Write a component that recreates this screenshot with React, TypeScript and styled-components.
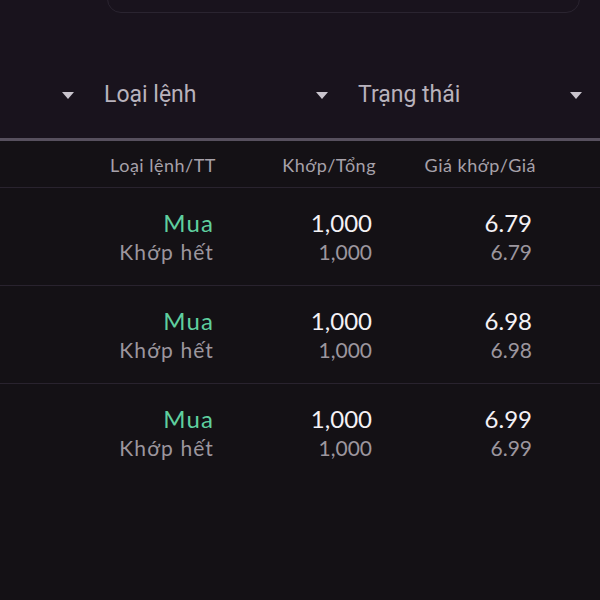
import React from 'react';
import styled, { createGlobalStyle } from 'styled-components';

const GlobalStyle = createGlobalStyle`
  html, body {
    margin: 0;
    padding: 0;
    background: #141115;
  }
  body {
    font-family: 'Lato', 'Noto Sans', sans-serif;
    overflow: hidden;
  }
`;

const Page = styled.div`
  width: 600px;
  height: 600px;
  display: flex;
  flex-direction: column;
  background: #141115;
  overflow: hidden;
`;

const TopPanel = styled.div`
  height: 138px;
  background: #19131d;
  display: flex;
  flex-direction: column;
  overflow: hidden;
`;

const SearchBox = styled.div`
  margin: -27px 0 0 107px;
  width: 471px;
  height: 38px;
  border: 1.5px solid #2a2430;
  border-radius: 14px;
  flex-shrink: 0;
`;

const FilterRow = styled.div`
  display: flex;
  gap: 30px;
  margin: 66px 0 0 -150px;
  height: 30px;
  align-items: center;
`;

const Filter = styled.div`
  width: 224px;
  flex-shrink: 0;
  display: flex;
  align-items: center;
  justify-content: space-between;
  font-family: 'Roboto', sans-serif;
  font-size: 23px;
  color: #b8b2bc;
`;

const Caret = styled.span`
  width: 0;
  height: 0;
  border-left: 6.5px solid transparent;
  border-right: 6.5px solid transparent;
  border-top: 7px solid #c9c4cd;
  margin-top: 2px;
`;

const Divider = styled.div`
  height: 3px;
  background: #57505e;
`;

const Grid = styled.div`
  display: grid;
  grid-template-columns: 216px 160px 160px;
`;

const HeaderRow = styled(Grid)`
  height: 46px;
  align-items: center;
  border-bottom: 1px solid #29232e;
  font-size: 18px;
  letter-spacing: 0.5px;
  color: #a7a1aa;
`;

const HeadCell = styled.div`
  text-align: right;
  padding-top: 2px;
`;

const OrderRow = styled(Grid)<{ $last?: boolean }>`
  height: 98px;
  box-sizing: border-box;
  border-bottom: ${p => (p.$last ? 'none' : '1px solid #29232e')};
  align-content: center;
`;

const Cell = styled.div<{ $spaced?: boolean }>`
  display: flex;
  flex-direction: column;
  align-items: flex-end;
  line-height: 29px;
  padding-right: ${p => (p.$spaced ? '2px' : '4px')};
  letter-spacing: ${p => (p.$spaced ? '1.1px' : '0')};
`;

const Main = styled.span<{ $color?: string }>`
  font-size: 24px;
  color: ${p => p.$color ?? '#f4f2f5'};
`;

const Sub = styled.span`
  font-size: 21px;
  color: #9c969e;
`;

interface Order {
  side: string;
  status: string;
  matched: string;
  total: string;
  matchedPrice: string;
  price: string;
}

const orders: Order[] = [
  { side: 'Mua', status: 'Khớp hết', matched: '1,000', total: '1,000', matchedPrice: '6.79', price: '6.79' },
  { side: 'Mua', status: 'Khớp hết', matched: '1,000', total: '1,000', matchedPrice: '6.98', price: '6.98' },
  { side: 'Mua', status: 'Khớp hết', matched: '1,000', total: '1,000', matchedPrice: '6.99', price: '6.99' },
];

const App: React.FC = () => (
  <Page>
    <GlobalStyle />
    <TopPanel>
      <SearchBox />
      <FilterRow>
        <Filter>
          <span />
          <Caret />
        </Filter>
        <Filter>
          <span>Loại lệnh</span>
          <Caret />
        </Filter>
        <Filter>
          <span>Trạng thái</span>
          <Caret />
        </Filter>
      </FilterRow>
    </TopPanel>
    <Divider />
    <HeaderRow>
      <HeadCell>Loại lệnh/TT</HeadCell>
      <HeadCell>Khớp/Tổng</HeadCell>
      <HeadCell>Giá khớp/Giá</HeadCell>
    </HeaderRow>
    {orders.map((o, i) => (
      <OrderRow key={i} $last={i === orders.length - 1}>
        <Cell $spaced>
          <Main $color="#5fcf9f">{o.side}</Main>
          <Sub>{o.status}</Sub>
        </Cell>
        <Cell>
          <Main>{o.matched}</Main>
          <Sub>{o.total}</Sub>
        </Cell>
        <Cell>
          <Main>{o.matchedPrice}</Main>
          <Sub>{o.price}</Sub>
        </Cell>
      </OrderRow>
    ))}
  </Page>
);

export default App;
